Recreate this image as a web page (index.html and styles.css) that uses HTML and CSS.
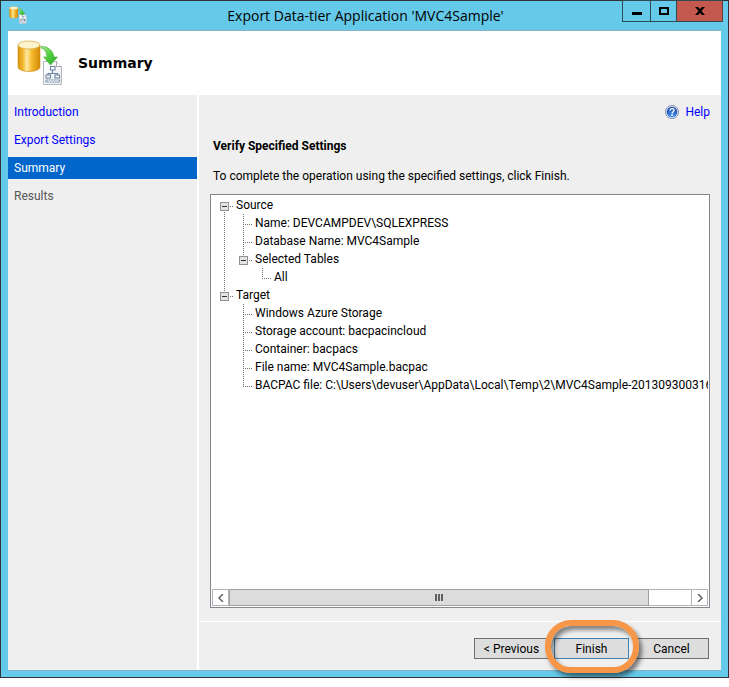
FILE: index.html
```html
<!DOCTYPE html>
<html lang="en">
<head>
<meta charset="utf-8">
<meta name="viewport" content="width=device-width, initial-scale=1">
<title>Export Data-tier Application 'MVC4Sample'</title>
<link rel="stylesheet" href="styles.css">
</head>
<body>
<svg width="0" height="0" class="defs" aria-hidden="true">
  <defs>
    <linearGradient id="gold" x1="0" x2="1" y1="0" y2="0">
      <stop offset="0" stop-color="#d9960f"/>
      <stop offset=".22" stop-color="#f3b62c"/>
      <stop offset=".4" stop-color="#fdeaa6"/>
      <stop offset=".62" stop-color="#f5bb2e"/>
      <stop offset="1" stop-color="#d48a05"/>
    </linearGradient>
    <linearGradient id="leaf" x1="0" x2="1" y1="0" y2="1">
      <stop offset="0" stop-color="#a5e58c"/>
      <stop offset=".5" stop-color="#4fcc3e"/>
      <stop offset="1" stop-color="#2ea82a"/>
    </linearGradient>
    <linearGradient id="sheet" x1="0" x2="1" y1="0" y2="1">
      <stop offset="0" stop-color="#ffffff"/>
      <stop offset="1" stop-color="#e9ebee"/>
    </linearGradient>
    <radialGradient id="ball" cx=".5" cy=".85" r=".8">
      <stop offset="0" stop-color="#4d9bf5"/>
      <stop offset="1" stop-color="#1644a8"/>
    </radialGradient>
    <symbol id="export" viewBox="0 0 46 46">
      <path d="M1 5v22c0 2.500 5 4.500 11 4.500s11-2 11-4.500V5z" fill="url(#gold)" stroke="#c98a14" stroke-width=".6"/>
      <ellipse cx="12" cy="5" rx="11" ry="4" fill="#fdf3cd" stroke="#dcae4c" stroke-width=".8"/>
      <path d="M26.500 21.500h13l5 5v18h-18z" fill="url(#sheet)" stroke="#b4b7bb"/>
      <path d="M39.500 21.500v5h5" fill="#fff" stroke="#a2a5a9"/>
      <path d="M24 6.500c7-.5 12 4 13 10.500h3.500l-7 8-7-8h3.500c-.5-4.500-2-8-6-9z" fill="url(#leaf)" stroke="#3fae35" stroke-width=".6"/>
      <g fill="#fff" stroke="#6d86a6" stroke-width="1.100">
        <path d="M35.500 30v3.500M31 36v-2.500h9.500V36" fill="none"/>
        <rect x="33.500" y="26.500" width="4.500" height="3.500"/>
        <rect x="29" y="35" width="4.500" height="3"/>
        <rect x="38" y="35" width="4.500" height="3"/>
        <rect x="29" y="40" width="13.500" height="2" stroke-dasharray="2 .6"/>
      </g>
    </symbol>
  </defs>
</svg>

<div class="window">
  <header class="titlebar">
    <svg class="app-icon" aria-hidden="true"><use href="#export"/></svg>
    <h1 class="title">Export Data-tier Application 'MVC4Sample'</h1>
    <div class="controls">
      <button class="control minimize" type="button" aria-label="Minimize"><svg width="10" height="10" viewBox="0 0 10 10"><path d="M0 6h10v3H0z"/></svg></button>
      <button class="control maximize" type="button" aria-label="Maximize"><svg width="10" height="8" viewBox="0 0 10 8"><path d="M1 1h8v6H1z" fill="none" stroke="#000" stroke-width="2"/></svg></button>
      <button class="control close" type="button" aria-label="Close"><svg width="10" height="8" viewBox="0 0 10 8"><path d="M0 0h3l2 2 2-2h3L6.500 4 10 8H7L5 6 3 8H0l3.500-4z"/></svg></button>
    </div>
  </header>

  <div class="client">
    <div class="banner">
      <svg class="banner-icon" aria-hidden="true"><use href="#export"/></svg>
      <h2 class="banner-title">Summary</h2>
    </div>

    <div class="columns">
      <nav class="steps">
        <a class="step" href="#introduction">Introduction</a>
        <a class="step" href="#settings">Export Settings</a>
        <a class="step current" href="#summary" aria-current="step">Summary</a>
        <span class="step pending">Results</span>
      </nav>

      <div class="panel">
        <main class="content">
          <a class="help" href="#help">
            <svg width="14" height="14" viewBox="0 0 14 14" aria-hidden="true">
              <circle cx="7" cy="7" r="6.500" fill="#e8eef8" stroke="#7d8fb0"/>
              <circle cx="7" cy="7" r="5.300" fill="url(#ball)"/>
              <path d="M5 5.600c0-2.700 4.100-2.600 4.100-.3 0 1.400-2 1.500-2 3.100" fill="none" stroke="#fff" stroke-width="1.400"/>
              <circle cx="7.100" cy="10.200" r=".9" fill="#fff"/>
            </svg>
            Help
          </a>
          <h3 class="heading">Verify Specified Settings</h3>
          <p class="intro">To complete the operation using the specified settings, click Finish.</p>

          <div class="tree-box">
            <ul class="tree">
              <li><button class="toggle" type="button" aria-label="Collapse Source"></button>Source
                <ul>
                  <li>Name: DEVCAMPDEV\SQLEXPRESS</li>
                  <li>Database Name: MVC4Sample</li>
                  <li><button class="toggle" type="button" aria-label="Collapse Selected Tables"></button>Selected Tables
                    <ul>
                      <li>All</li>
                    </ul>
                  </li>
                </ul>
              </li>
              <li><button class="toggle" type="button" aria-label="Collapse Target"></button>Target
                <ul>
                  <li>Windows Azure Storage</li>
                  <li>Storage account: bacpacincloud</li>
                  <li>Container: bacpacs</li>
                  <li>File name: MVC4Sample.bacpac</li>
                  <li>BACPAC file: C:\Users\devuser\AppData\Local\Temp\2\MVC4Sample-20130930031623</li>
                </ul>
              </li>
            </ul>
            <div class="scrollbar">
              <button class="arrow" type="button" aria-label="Scroll left"><svg width="6" height="8" viewBox="0 0 6 8"><path d="M5 0L1 4l4 4"/></svg></button>
              <div class="track"><div class="thumb"><i></i><i></i><i></i></div></div>
              <button class="arrow" type="button" aria-label="Scroll right"><svg width="6" height="8" viewBox="0 0 6 8"><path d="M1 0l4 4-4 4"/></svg></button>
            </div>
          </div>
        </main>

        <footer class="actions">
          <button class="action" type="button">&lt; Previous</button>
          <div class="marked">
            <button class="action default" type="button">Finish</button>
          </div>
          <button class="action" type="button">Cancel</button>
        </footer>
      </div>
    </div>
  </div>
</div>
</body>
</html>
```
FILE: styles.css
```css
* {
  box-sizing: border-box;
}

body {
  display: flex;
  flex-direction: column;
  min-height: 100vh;
  margin: 0;
  padding-bottom: 9px;
  background: #fff;
  color: #000;
  font: 12px/18px Roboto, "Open Sans", sans-serif;
}

h1, h2, h3, p, ul {
  margin: 0;
  padding: 0;
}

button {
  padding: 0;
  color: inherit;
  font: inherit;
}

a {
  color: #00f;
  text-decoration: none;
}

.defs {
  position: absolute;
}

.window {
  display: flex;
  flex: 1;
  flex-direction: column;
  padding: 0 7px 6px;
  border: 1px solid #2f3338;
  background: #65c9e9;
}

.titlebar {
  display: grid;
  grid-template-columns: 1fr auto 1fr;
  height: 29px;
  margin-right: -2px;
}

.app-icon {
  width: 18px;
  height: 18px;
  margin: 5px 0 0 1px;
}

.title {
  font-family: "Open Sans", "Noto Sans", sans-serif;
  font-size: 14px;
  font-weight: 400;
  line-height: 30px;
}

.controls {
  display: flex;
  justify-content: flex-end;
  height: 22px;
  margin-top: -1px;
}

.control {
  display: flex;
  align-items: center;
  justify-content: center;
  width: 28px;
  border: 1px solid #2f4a55;
  border-right: 0;
  background: none;
}

.maximize {
  width: 26px;
}

.close {
  width: 47px;
  border-right: 1px solid #6b3a38;
  background: #c3594f;
}

.client {
  display: flex;
  flex: 1;
  flex-direction: column;
  border-top: 1px solid #86b3c4;
  border-bottom: 1px solid #86b3c4;
  background: #fff;
}

.banner {
  display: flex;
  align-items: center;
  gap: 15px;
  height: 64px;
  padding-left: 9px;
}

.banner-icon {
  width: 46px;
  height: 46px;
}

.banner-title {
  font: bold 14px/20px "DejaVu Sans", sans-serif;
}

.columns {
  display: flex;
  flex: 1;
  gap: 2px;
}

.steps {
  display: flex;
  flex-direction: column;
  gap: 6px;
  width: 189px;
  padding-top: 6px;
  background: #efefef;
}

.step {
  padding: 2px 6px;
}

.current {
  background: #06c;
  color: #fff;
}

.pending {
  color: #555;
}

.panel {
  display: flex;
  flex: 1;
  flex-direction: column;
  min-width: 0;
  background: #efefef;
}

.content {
  display: flex;
  flex: 1;
  flex-direction: column;
  min-width: 0;
  padding: 8px 11px 13px;
}

.help {
  display: flex;
  align-items: center;
  align-self: flex-end;
  gap: 6px;
}

.heading {
  margin: 16px 0 12px;
  padding-left: 3px;
  font-size: 12px;
  font-weight: 700;
}

.intro {
  margin-bottom: 9px;
  padding-left: 3px;
}

.tree-box {
  display: flex;
  flex: 1;
  flex-direction: column;
  min-width: 0;
  padding: 1px;
  border: 1px solid #828790;
  background: #fff;
}

.tree {
  flex: 1;
  padding-left: 8px;
  overflow: hidden;
  white-space: nowrap;
}

.tree ul {
  margin-left: 3px;
}

.tree li {
  position: relative;
  padding-left: 16px;
  list-style: none;
}

.tree li::before,
.tree li::after {
  position: absolute;
  left: 4px;
  content: "";
}

.tree li::before {
  top: 0;
  bottom: 0;
  width: 1px;
  background: repeating-linear-gradient(#707070 0 1px, transparent 1px 2px);
}

.tree > li:first-child::before {
  top: 10px;
}

.tree li:last-child::before {
  bottom: auto;
  height: 10px;
}

.tree li::after {
  top: 10px;
  width: 9px;
  height: 1px;
  background: repeating-linear-gradient(90deg, #707070 0 1px, transparent 1px 2px);
}

.toggle {
  position: absolute;
  z-index: 1;
  top: 6px;
  left: 0;
  width: 9px;
  height: 9px;
  border: 1px solid #919191;
  background: linear-gradient(#333, #333) center / 5px 1px no-repeat #e4e4e4;
}

.scrollbar {
  display: flex;
  height: 17px;
}

.arrow {
  display: flex;
  align-items: center;
  justify-content: center;
  width: 17px;
  border: 1px solid #b4b4b4;
  background: #fff;
}

.arrow path {
  fill: none;
  stroke: #606060;
  stroke-width: 1.5;
}

.track {
  flex: 1;
  border: solid #b4b4b4;
  border-width: 1px 0;
}

.thumb {
  display: flex;
  align-items: center;
  justify-content: center;
  gap: 1px;
  width: 91%;
  height: 17px;
  margin-top: -1px;
  border: 1px solid #a0a0a0;
  background: #dcdcdc;
}

.thumb i {
  width: 2px;
  height: 7px;
  background: #606060;
}

.actions {
  display: flex;
  justify-content: flex-end;
  gap: 5px;
  padding: 16px 12px 11px;
  border-top: 1px solid #fff;
}

.action {
  width: 75px;
  height: 21px;
  border: 1px solid #707070;
  background: #ddd;
  line-height: 18px;
}

.default {
  border-color: #3c7fb1;
}

.marked {
  position: relative;
}

.marked::after {
  position: absolute;
  inset: -18px -10px -14px -9px;
  border: 6px solid #f79646;
  border-radius: 26px;
  box-shadow: 3px 4px 4px rgba(0, 0, 0, .5), inset 3px 4px 4px rgba(0, 0, 0, .45);
  content: "";
  pointer-events: none;
}
```
